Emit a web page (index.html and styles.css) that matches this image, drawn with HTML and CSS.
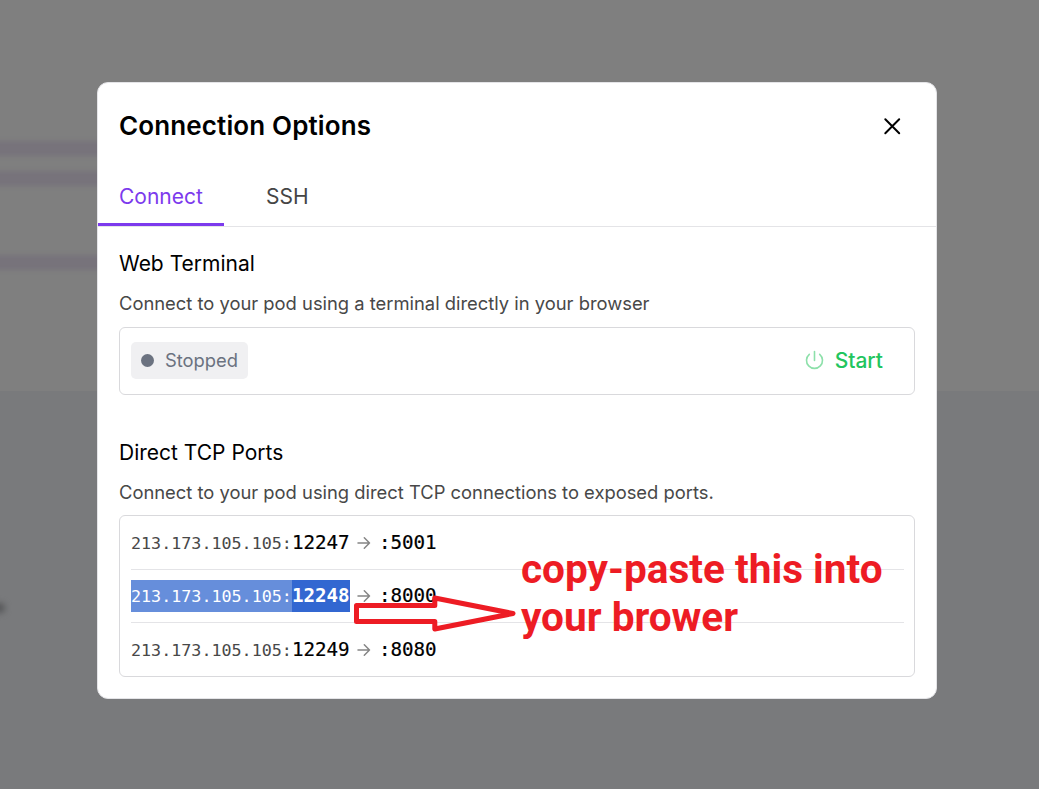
FILE: index.html
```html
<!DOCTYPE html>
<html lang="en">
<head>
<meta charset="utf-8">
<title>Connection Options</title>
<link rel="stylesheet" href="styles.css">
</head>
<body>
<div class="backdrop">
  <div class="band band-1"></div>
  <div class="band band-2"></div>
  <div class="band band-3"></div>
  <div class="lower"></div>
  <div class="smudge"></div>
</div>
<main class="modal">
  <header class="head">
    <h1 class="title">Connection Options</h1>
    <svg class="close" width="20" height="20" viewBox="0 0 20 20"><path d="M3.3 3.3 17.2 17.2M17.2 3.3 3.3 17.2"/></svg>
  </header>
  <nav class="tabs">
    <div class="tab active"><span>Connect</span></div>
    <div class="tab"><span>SSH</span></div>
  </nav>
  <section class="section">
    <h2 class="heading">Web Terminal</h2>
    <p class="desc">Connect to your pod using a terminal directly in your browser</p>
    <div class="box terminal">
      <div class="badge"><i class="dot"></i><span>Stopped</span></div>
      <div class="start">
        <svg class="power" width="20" height="22" viewBox="0 0 20 22"><path d="M10.5 2.5V11.5M5.3 5.3A8 8 0 1 0 15.7 5.3"/></svg>
        <span>Start</span>
      </div>
    </div>
  </section>
  <section class="section ports-section">
    <h2 class="heading">Direct TCP Ports</h2>
    <p class="desc">Connect to your pod using direct TCP connections to exposed ports.</p>
    <div class="box ports">
      <div class="row"><span class="ip">213.173.105.105:</span><span class="port">12247</span><svg class="arrow" width="14" height="14" viewBox="0 0 14 14"><path d="M1 7H12.5M7.3 1.8 12.5 7 7.3 12.2"/></svg><span class="port">:5001</span></div>
      <div class="row"><span class="ip sel">213.173.105.105:</span><span class="port sel-port">12248</span><svg class="arrow" width="14" height="14" viewBox="0 0 14 14"><path d="M1 7H12.5M7.3 1.8 12.5 7 7.3 12.2"/></svg><span class="port">:8000</span></div>
      <div class="row"><span class="ip">213.173.105.105:</span><span class="port">12249</span><svg class="arrow" width="14" height="14" viewBox="0 0 14 14"><path d="M1 7H12.5M7.3 1.8 12.5 7 7.3 12.2"/></svg><span class="port">:8080</span></div>
    </div>
  </section>
</main>
<svg class="pointer" width="170" height="50" viewBox="350 590 170 50"><path d="M356.5 605.5H434.8V598L513 613.5L434.8 629V621.5H356.5Z"/></svg>
<div class="note"><span>copy-paste this into</span><br><span>your brower</span></div>
</body>
</html>
```
FILE: styles.css
```css
* { box-sizing: border-box; }
body {
  margin: 0;
  width: 1039px;
  height: 789px;
  overflow: hidden;
  position: relative;
  background: #7f7f7f;
  font-family: Inter, sans-serif;
  padding: 82px 0 0 97px;
}
h1, h2, p { margin: 0; font-weight: 400; }
span { white-space: nowrap; }
svg { fill: none; display: block; flex: none; }

.backdrop { position: absolute; inset: 0; overflow: hidden; }
.band { position: absolute; left: -10px; width: 200px; height: 15px; background: #77737b; filter: blur(2px); }
.band-1 { top: 141px; }
.band-2 { top: 171px; }
.band-3 { top: 255px; }
.lower { position: absolute; top: 391px; left: 0; right: 0; bottom: 0; background: #797a7c; }
.smudge { position: absolute; left: -8px; top: 603px; width: 13px; height: 10px; border-radius: 5px; background: #555658; filter: blur(3px); }

.modal {
  position: relative;
  width: 840px;
  height: 617px;
  background: #fff;
  border: 1px solid #e4e4e7;
  border-radius: 11px;
}
.head { display: flex; justify-content: space-between; align-items: center; height: 87px; padding: 0 34px 2px 21px; }
.title { font-size: 26px; line-height: 32px; font-weight: 600; letter-spacing: 0.13px; color: #000; }
.close { stroke: #000; stroke-width: 2; stroke-linecap: round; }
.tabs { display: flex; height: 57px; border-bottom: 1px solid #e4e4e7; }
.tab { height: 56px; padding: 0 21px 3px; display: flex; align-items: center; font-size: 21px; color: #454545; width: 126px; }
.tab.active { color: #7c3aed; border-bottom: 3px solid #7c3aed; padding-bottom: 0; }
.tab + .tab { margin-left: 21px; }
.section { padding: 21px 21px 0; }
.heading { font-size: 21px; line-height: 32px; color: #000; }
.desc { margin-top: 10px; font-size: 18.37px; line-height: 26px; color: #484848; }
.box { border: 1px solid #d9d9dc; border-radius: 6px; width: 796px; }
.terminal { margin-top: 11px; height: 68px; display: flex; align-items: center; justify-content: space-between; padding: 0 31px 0 11px; }
.badge { display: flex; align-items: center; width: 117px; height: 37px; margin-bottom: 1px; background: #f0f0f2; border-radius: 5px; padding-left: 10px; gap: 11px; color: #6b7280; font-size: 18.37px; }
.badge span { padding-bottom: 2px; }
.dot { width: 13px; height: 13px; border-radius: 50%; background: #6b7280; }
.start { display: flex; align-items: center; gap: 11px; margin-bottom: 2px; font-size: 21px; font-weight: 500; color: #22c55e; }
.power { stroke: #8de0aa; stroke-width: 1.6; stroke-linecap: round; }
.ports-section { padding-top: 42px; }
.ports { margin-top: 10px; height: 162px; padding: 0 10px 0 11px; }
.row { display: flex; align-items: center; height: 53px; border-bottom: 1px solid #e4e4e7; font-family: Consolas, "DejaVu Sans Mono", monospace; line-height: 32px; }
.row:first-child { height: 54px; }
.row:last-child { border: 0; }
.ip { width: 161px; font-size: 16.72px; color: #484848; }
.port { font-size: 19.2px; letter-spacing: -0.04px; color: #000; width: 58px; -webkit-text-stroke: 0.2px currentColor; }
.sel { background: #668edb; color: #fff; }
.sel-port { background: #3267d1; color: #fff; font-weight: 700; -webkit-text-stroke: 0; }
.arrow { stroke: #858585; stroke-width: 1.5; stroke-linecap: round; stroke-linejoin: round; margin: 0 8px 0 7px; }

.pointer { position: absolute; left: 350px; top: 590px; stroke: #ed1c24; stroke-width: 5; stroke-linejoin: round; }
.note { position: absolute; left: 521px; top: 545px; font-family: Roboto, sans-serif; font-weight: 700; font-size: 40.55px; line-height: 48px; color: #ed1c24; }
```
